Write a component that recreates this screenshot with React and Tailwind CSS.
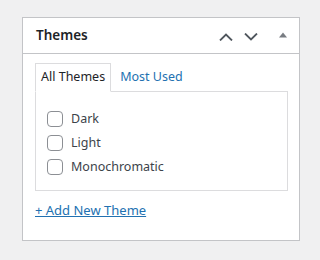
import React from 'react';

const THEMES = ['Dark', 'Light', 'Monochromatic'];

const Chevron = ({ up }) => (
  <svg width="14" height="8" viewBox="0 0 14 8" fill="none" className="block">
    <path
      d={up ? 'M1 7.5 L7 1.5 L13 7.5' : 'M1 0.5 L7 6.5 L13 0.5'}
      stroke="#50575e"
      strokeWidth="1.8"
    />
  </svg>
);

const App = () => {
  return (
    <div className="w-[320px] h-[260px] bg-[#f0f0f1] pt-[17px] pl-[22px] font-['Noto_Sans','Open_Sans',sans-serif]">
      <div className="w-[278px] h-[224px] bg-white border border-[#c3c4c7]">
        {/* Header */}
        <div className="h-[36px] border-b border-[#c3c4c7] flex items-center pl-[13px]">
          <h2 className="text-[13.5px] font-semibold text-[#1d2327] leading-none">Themes</h2>
          <div className="ml-auto flex items-center mr-[12px]">
            <div className="mt-[2px]">
              <Chevron up />
            </div>
            <div className="ml-[11px] mt-[2px]">
              <Chevron />
            </div>
            <svg width="8" height="6" viewBox="0 0 8 6" className="block ml-[21px] -mt-[2px]">
              <path d="M0 5.5 L4 0.5 L8 5.5 Z" fill="#787c82" />
            </svg>
          </div>
        </div>

        {/* Tabs */}
        <div className="pl-[12px] pr-[11px] pt-[9px]">
          <div className="flex items-stretch h-[28px] text-[12.5px]">
            <div className="relative z-10 -mb-px flex items-center px-[5px] bg-white border border-[#dcdcde] border-b-white text-[#1d2327]">
              All Themes
            </div>
            <a href="#" className="flex items-center ml-[9px] text-[#2271b1]">
              Most Used
            </a>
          </div>

          <div className="h-[100px] border border-[#dcdcde] pl-[11px] pt-[19px]">
            <ul className="flex flex-col gap-[8px]">
              {THEMES.map((t) => (
                <li key={t} className="flex items-center h-[16px] text-[12.5px] text-[#3c434a]">
                  <span className="w-[16px] h-[16px] border border-[#8c8f94] rounded-[4px] bg-white shrink-0" />
                  <span className="ml-[8px]">{t}</span>
                </li>
              ))}
            </ul>
          </div>

          <a href="#" className="block mt-[9px] w-fit text-[13px] leading-[20px] text-[#2271b1] underline underline-offset-[1px]">
            + Add New Theme
          </a>
        </div>
      </div>
    </div>
  );
};

export default App;
